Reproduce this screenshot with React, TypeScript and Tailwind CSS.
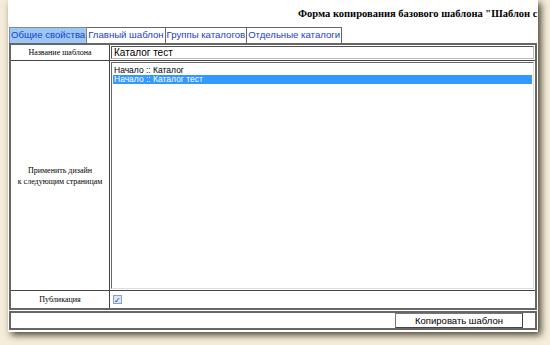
import React from "react";

const tabs = ["Общие свойства", "Главный шаблон", "Группы каталогов", "Отдельные каталоги"];

const App = () => {
  return (
    <div className="w-[550px] h-[345px] overflow-hidden bg-[#f5edd9] pl-[8px]">
      <div className="w-[530px] h-[332px] bg-white shadow-[3px_3px_7px_rgba(40,35,20,0.85)] flex flex-col overflow-hidden">
        <div className="h-[27px] pl-[290px] pt-[6px] whitespace-nowrap overflow-hidden font-['Liberation_Serif',serif] font-bold text-[10.5px] text-black">
          Форма копирования базового шаблона "Шаблон с каталогами"
        </div>

        <div className="flex pl-[1px] h-[16px] font-['Liberation_Sans',sans-serif] text-[9.6px] leading-[14px] text-[#1a3cd6]">
          {tabs.map((t, i) => (
            <div
              key={t}
              className={
                i === 0
                  ? "border border-[#888] border-b-0 px-[1px] bg-[#9cc8f8] whitespace-nowrap"
                  : "border border-[#666] border-b-0 border-l-0 px-[1px] bg-white whitespace-nowrap"
              }
            >
              {t}
            </div>
          ))}
        </div>

        <div className="ml-[1px] w-[528px] border-2 border-double border-[#666] flex flex-col h-[267px]">
          <div className="flex h-[16px] border-b border-[#444]">
            <div className="w-[99px] border-r border-[#444] flex items-center justify-center font-['Liberation_Serif',serif] text-[8px] text-black">
              Название шаблона
            </div>
            <div className="flex-1 px-[1px] py-[1px]">
              <div className="h-full border border-[#555] border-r-[#bbb] border-b-[#bbb] pl-[2px] font-['Liberation_Sans',sans-serif] text-[10px] leading-[12px] text-black">
                Каталог тест
              </div>
            </div>
          </div>

          <div className="flex flex-1 border-b border-[#444]">
            <div className="w-[99px] border-r border-[#444] flex items-center justify-center text-center font-['Liberation_Serif',serif] text-[8px] leading-[11px] text-black">
              Применить дизайн
              <br />к следующим страницам
            </div>
            <div className="flex-1 p-[1px]">
              <div className="h-full border border-[#666] border-r-[#ddd] border-b-[#ddd] pt-[3px] pl-[1px] pr-[1px] font-['Liberation_Sans',sans-serif] text-[8.5px] leading-[9px]">
                <div className="pl-[1px] text-black">Начало :: Каталог</div>
                <div className="pl-[1px] bg-[#3399ff] text-white">Начало :: Каталог тест</div>
              </div>
            </div>
          </div>

          <div className="flex h-[17px]">
            <div className="w-[99px] border-r border-[#444] flex items-center justify-center font-['Liberation_Serif',serif] text-[8px] text-black">
              Публикация
            </div>
            <div className="flex-1 flex items-center pl-[3px]">
              <div className="w-[9px] h-[9px] border border-[#8aa0c0] bg-[#dde6f2] flex items-center justify-center text-[8px] leading-none text-[#2a3aa0]">
                ✓
              </div>
            </div>
          </div>
        </div>

        <div className="ml-[1px] mt-[1px] w-[528px] h-[19px] border-2 border-double border-[#666] flex justify-end items-center pr-[12px]">
          <div className="w-[128px] h-[15px] border border-[#777] border-r-[#444] border-b-[#444] flex items-center justify-center font-['Liberation_Sans',sans-serif] text-[9.5px] leading-none text-black">
            Копировать шаблон
          </div>
        </div>
      </div>
    </div>
  );
};

export default App;
